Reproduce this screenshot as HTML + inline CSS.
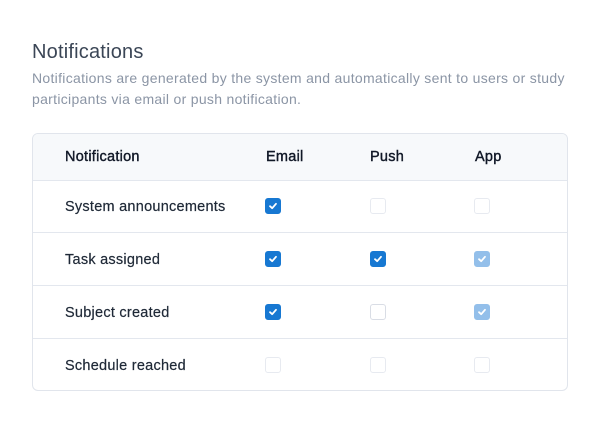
<!DOCTYPE html>
<html><head><style>
body{margin:0;width:600px;height:440px;background:#fff;font-family:"Liberation Sans",sans-serif;position:relative;overflow:hidden}
.t{position:absolute;left:32px;top:41px;font-size:20px;letter-spacing:0.2px;color:#3b4656}
.s{position:absolute;left:32px;top:68px;width:545px;font-size:14px;letter-spacing:0.3px;line-height:21px;color:#8b95a5}
.card{position:absolute;left:32px;top:133px;width:534px;height:256px;border:1px solid #e1e5ec;border-radius:6px;overflow:hidden}
.hd{position:absolute;left:0;top:0;width:100%;height:46px;background:#f7f9fb;border-bottom:1px solid #e3e7ee}
.r{position:absolute;left:0;width:100%;border-bottom:1px solid #e3e7ee;height:52px}
.l{position:absolute;font-size:14.5px;letter-spacing:0.25px;color:#1f2937;-webkit-text-stroke:0.2px #1f2937}
.h{color:#111827;-webkit-text-stroke:0.4px #111827}
.cb{position:absolute;width:14px;height:14px;border-radius:3px;border:1px solid #d9dde5;box-sizing:content-box}
.cb.d{border-color:#e7eaf0}
.cb.on{background:#1778d2;border-color:#1778d2}
.cb.dis{background:#93bfea;border-color:#93bfea}
.cb svg{position:absolute;left:2px;top:2px}
</style></head><body>
<div class="t">Notifications</div>
<div class="s">Notifications are generated by the system and automatically sent to users or study participants via email or push notification.</div>
<div class="card">
<div class="hd"></div>
<div class="r" style="top:46px"></div>
<div class="r" style="top:99px"></div>
<div class="r" style="top:152px"></div>
<div class="l h" style="left:32px;top:15px">Notification</div>
<div class="l h" style="left:233px;top:15px">Email</div>
<div class="l h" style="left:337px;top:15px">Push</div>
<div class="l h" style="left:442px;top:15px">App</div>
<div class="l" style="left:32px;top:65px">System announcements</div>
<div class="l" style="left:32px;top:118px">Task assigned</div>
<div class="l" style="left:32px;top:171px">Subject created</div>
<div class="l" style="left:32px;top:224px">Schedule reached</div>
</div>
<div class="cb on" style="left:265px;top:198px"><svg width="10" height="10" viewBox="0 0 10 10"><path d="M2 5.2 L4.2 7.2 L8 2.8" stroke="#fff" stroke-width="1.8" fill="none" stroke-linecap="round" stroke-linejoin="round"/></svg></div>
<div class="cb d" style="left:370px;top:198px"></div>
<div class="cb d" style="left:474px;top:198px"></div>
<div class="cb on" style="left:265px;top:251px"><svg width="10" height="10" viewBox="0 0 10 10"><path d="M2 5.2 L4.2 7.2 L8 2.8" stroke="#fff" stroke-width="1.8" fill="none" stroke-linecap="round" stroke-linejoin="round"/></svg></div>
<div class="cb on" style="left:370px;top:251px"><svg width="10" height="10" viewBox="0 0 10 10"><path d="M2 5.2 L4.2 7.2 L8 2.8" stroke="#fff" stroke-width="1.8" fill="none" stroke-linecap="round" stroke-linejoin="round"/></svg></div>
<div class="cb dis" style="left:474px;top:251px"><svg width="10" height="10" viewBox="0 0 10 10"><path d="M2 5.2 L4.2 7.2 L8 2.8" stroke="#fff" stroke-width="1.8" fill="none" stroke-linecap="round" stroke-linejoin="round"/></svg></div>
<div class="cb on" style="left:265px;top:304px"><svg width="10" height="10" viewBox="0 0 10 10"><path d="M2 5.2 L4.2 7.2 L8 2.8" stroke="#fff" stroke-width="1.8" fill="none" stroke-linecap="round" stroke-linejoin="round"/></svg></div>
<div class="cb" style="left:370px;top:304px"></div>
<div class="cb dis" style="left:474px;top:304px"><svg width="10" height="10" viewBox="0 0 10 10"><path d="M2 5.2 L4.2 7.2 L8 2.8" stroke="#fff" stroke-width="1.8" fill="none" stroke-linecap="round" stroke-linejoin="round"/></svg></div>
<div class="cb d" style="left:265px;top:357px"></div>
<div class="cb d" style="left:370px;top:357px"></div>
<div class="cb d" style="left:474px;top:357px"></div>
</body></html>
